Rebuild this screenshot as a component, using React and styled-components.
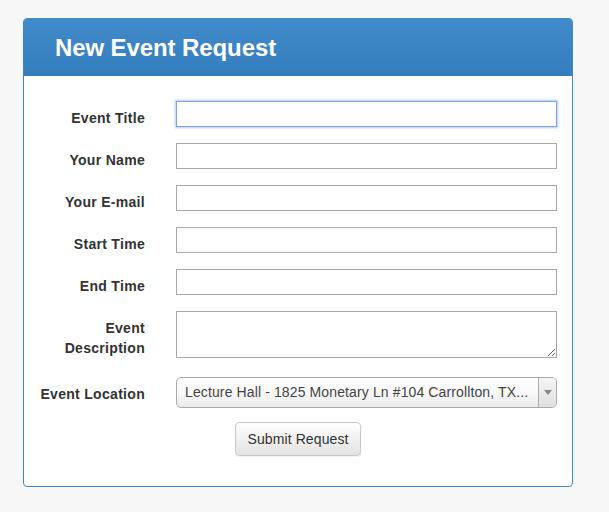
import React from "react";
import styled, { createGlobalStyle } from "styled-components";

const Global = createGlobalStyle`
  html, body { margin: 0; padding: 0; background: #f7f7f7; }
  body { font-family: "Liberation Sans", Arial, sans-serif; font-size: 14px; color: #333; }
  * { box-sizing: border-box; }
`;

const Page = styled.div`
  padding: 18px 0 0 23px;
  min-height: 512px;
`;

const Panel = styled.div`
  width: 550px;
  background: #fff;
  border: 1px solid #3f88cc;
  border-radius: 4px;
  overflow: hidden;
`;

const Header = styled.div`
  background: linear-gradient(to bottom, #428bca 0%, #357ebd 100%);
  padding: 15px 30px 15px 31px;
  height: 57px;
`;

const Title = styled.h1`
  margin: 0;
  font-size: 24px;
  line-height: 27px;
  font-weight: bold;
  color: #fff;
  letter-spacing: -0.1px;
`;

const Body = styled.form`
  padding: 25px 15px 30px 0;
  display: flex;
  flex-direction: column;
`;

const Row = styled.div`
  display: flex;
  align-items: flex-start;
  margin-bottom: ${(p) => p.$gap ?? 15}px;
`;

const Label = styled.label`
  width: 152px;
  flex: 0 0 152px;
  padding: 7px 31px 0 0;
  text-align: right;
  font-weight: bold;
  font-size: 14px;
  line-height: 20px;
  letter-spacing: 0.3px;
  color: #333;
`;

const Field = styled.div`
  flex: 1;
`;

const Input = styled.input`
  display: block;
  width: 381px;
  height: 26px;
  margin: 0;
  padding: 2px 3px;
  border: 1px solid #a9a9a9;
  border-radius: 0;
  font-family: "Liberation Sans", Arial, sans-serif;
  font-size: 14px;
  color: #333;
  background: #fff;
  outline: none;
  caret-color: #000;
  &:focus {
    border-color: #7ea3e4;
    box-shadow: 0 0 2px 1px rgba(120, 160, 230, 0.55);
  }
`;

const TextArea = styled.textarea`
  display: block;
  width: 381px;
  height: 47px;
  margin: 0;
  padding: 2px 3px;
  border: 1px solid #a9a9a9;
  font-family: "Liberation Sans", Arial, sans-serif;
  font-size: 14px;
  outline: none;
`;

const SelectBox = styled.div`
  display: flex;
  width: 381px;
  height: 31px;
  border: 1px solid #aaa;
  border-radius: 5px;
  background: linear-gradient(to bottom, #ffffff 0%, #f8f8f8 50%, #eaeaea 100%);
  overflow: hidden;
`;

const SelectText = styled.div`
  flex: 1;
  padding: 0 0 0 8px;
  line-height: 29px;
  font-size: 14px;
  letter-spacing: 0.12px;
  color: #444;
  white-space: nowrap;
  overflow: hidden;
`;

const ArrowBox = styled.div`
  width: 18px;
  flex: 0 0 18px;
  border-left: 1px solid #aaa;
  background: linear-gradient(to bottom, #f4f4f4 0%, #e0e0e0 100%);
  display: flex;
  align-items: center;
  justify-content: center;
`;

const ButtonRow = styled.div`
  display: flex;
  justify-content: center;
  padding-left: 15px;
`;

const Button = styled.button`
  width: 126px;
  height: 34px;
  margin: 0;
  padding: 0;
  border: 1px solid #c8c8c8;
  border-radius: 4px;
  background: linear-gradient(to bottom, #ffffff 0%, #e2e2e2 100%);
  box-shadow: 0 1px 1px rgba(0, 0, 0, 0.06);
  font-family: "Liberation Sans", Arial, sans-serif;
  font-size: 14px;
  letter-spacing: 0.1px;
  color: #333;
`;

export default function App() {
  return (
    <>
      <Global />
      <Page>
        <Panel>
          <Header>
            <Title>New Event Request</Title>
          </Header>
          <Body onSubmit={(e) => e.preventDefault()}>
            <Row>
              <Label>Event Title</Label>
              <Field>
                <Input autoFocus />
              </Field>
            </Row>
            <Row>
              <Label>Your Name</Label>
              <Field>
                <Input />
              </Field>
            </Row>
            <Row>
              <Label>Your E-mail</Label>
              <Field>
                <Input />
              </Field>
            </Row>
            <Row>
              <Label>Start Time</Label>
              <Field>
                <Input />
              </Field>
            </Row>
            <Row>
              <Label>End Time</Label>
              <Field>
                <Input />
              </Field>
            </Row>
            <Row $gap={19}>
              <Label>
                Event
                <br />
                Description
              </Label>
              <Field>
                <TextArea />
              </Field>
            </Row>
            <Row $gap={14}>
              <Label>Event Location</Label>
              <Field>
                <SelectBox>
                  <SelectText>
                    Lecture Hall - 1825 Monetary Ln #104 Carrollton, TX...
                  </SelectText>
                  <ArrowBox>
                    <svg width="8" height="5" viewBox="0 0 8 5">
                      <path d="M0 0 L8 0 L4 5 Z" fill="#888" />
                    </svg>
                  </ArrowBox>
                </SelectBox>
              </Field>
            </Row>
            <ButtonRow>
              <Button type="submit">Submit Request</Button>
            </ButtonRow>
          </Body>
        </Panel>
      </Page>
    </>
  );
}
